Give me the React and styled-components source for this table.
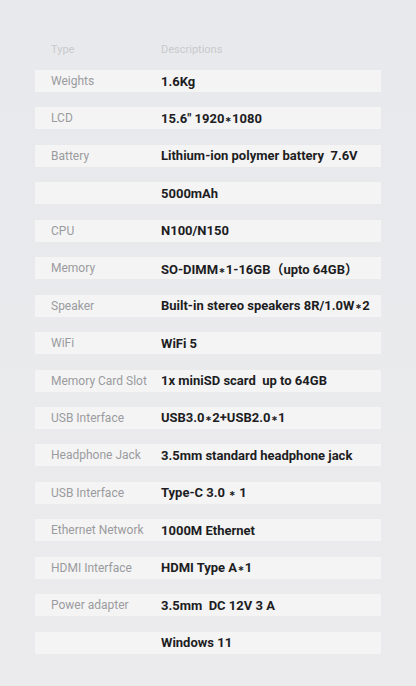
import React from 'react';
import styled, { createGlobalStyle } from 'styled-components';

const GlobalStyle = createGlobalStyle`
  html, body {
    margin: 0;
    padding: 0;
    background: #e9eaec;
  }
  body {
    font-family: Roboto, "Noto Sans CJK SC", sans-serif;
  }
`;

const Page = styled.div`
  width: 416px;
  min-height: 686px;
  box-sizing: border-box;
  padding: 38px 35px 0;
  background: linear-gradient(180deg, #e8e9ec 0%, #ebebed 100%);
`;

const Header = styled.div`
  display: grid;
  grid-template-columns: 110px 1fr;
  height: 22px;
  align-items: center;
  padding-left: 16px;
  margin-bottom: 10px;
  font-size: 11px;
  color: #c8c9cc;
`;

const List = styled.div`
  display: flex;
  flex-direction: column;
  gap: 15.45px;
`;

const Row = styled.div`
  display: grid;
  grid-template-columns: 110px 1fr;
  height: 22px;
  align-items: center;
  padding-left: 16px;
  background: #f4f4f5;
`;

const Label = styled.span`
  font-size: 12px;
  font-weight: 400;
  color: #9a9b9d;
  white-space: nowrap;
`;

const Value = styled.span`
  font-size: 13px;
  font-weight: 700;
  color: #1d1d1f;
  white-space: pre;
`;

const Star = styled.span`
  font-family: "DejaVu Sans", sans-serif;
  font-size: 8px;
  font-weight: 700;
  margin: 0 0.5px;
  vertical-align: 1px;
`;

const specs = [
  ['Weights', '1.6Kg'],
  ['LCD', '15.6" 1920*1080'],
  ['Battery', 'Lithium-ion polymer battery  7.6V'],
  ['', '5000mAh'],
  ['CPU', 'N100/N150'],
  ['Memory', 'SO-DIMM*1-16GB（upto 64GB）'],
  ['Speaker', 'Built-in stereo speakers 8R/1.0W*2'],
  ['WiFi', 'WiFi 5'],
  ['Memory Card Slot', '1x miniSD scard  up to 64GB'],
  ['USB Interface', 'USB3.0*2+USB2.0*1'],
  ['Headphone Jack', '3.5mm standard headphone jack'],
  ['USB Interface', 'Type-C 3.0 * 1'],
  ['Ethernet Network', '1000M Ethernet'],
  ['HDMI Interface', 'HDMI Type A*1'],
  ['Power adapter', '3.5mm  DC 12V 3 A'],
  ['', 'Windows 11'],
];

const renderValue = (text) =>
  text.split('*').flatMap((part, i) =>
    i === 0 ? [part] : [<Star key={i}>∗</Star>, part]
  );

export default function App() {
  return (
    <>
      <GlobalStyle />
      <Page>
        <Header>
          <span>Type</span>
          <span>Descriptions</span>
        </Header>
        <List>
          {specs.map(([label, value], i) => (
            <Row key={i}>
              <Label>{label}</Label>
              <Value>{renderValue(value)}</Value>
            </Row>
          ))}
        </List>
      </Page>
    </>
  );
}
